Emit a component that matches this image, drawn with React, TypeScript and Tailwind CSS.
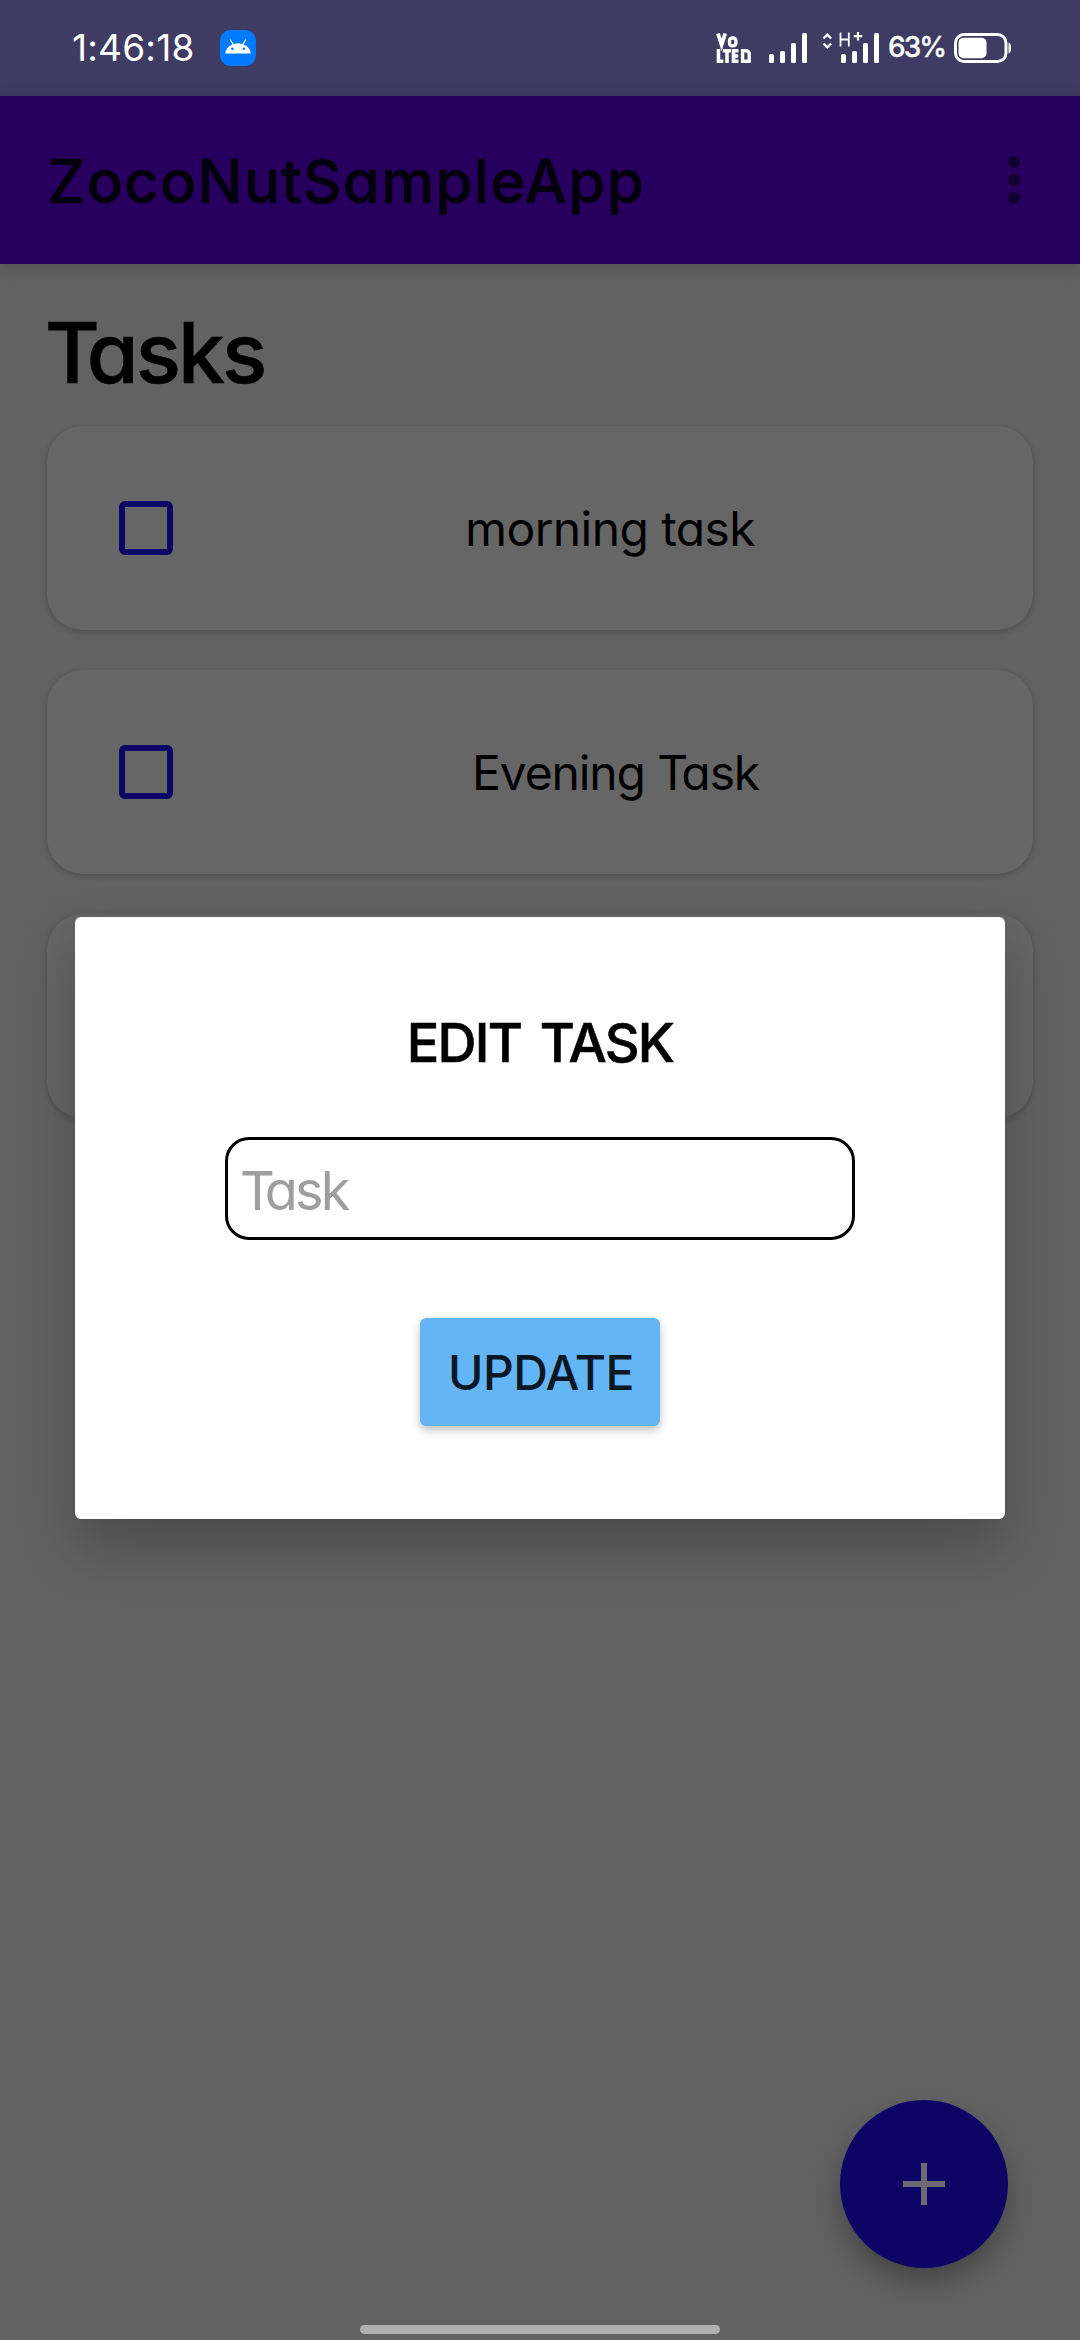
import React from "react";

function StatusBar() {
  return (
    <header className="flex h-24 shrink-0 items-start bg-[#3f3b63] text-white">
      <div className="ml-[72px] mt-[22px] w-[148px] whitespace-nowrap text-[37px] leading-[51px] tracking-[0.2px]">1:46:18</div>
      <svg className="mt-[30px]" width="36" height="36" viewBox="0 0 36 36">
        <rect width="36" height="36" rx="11" fill="#007bff" />
        <path d="M5.2 23.5a12.9 11.8 0 0 1 25.6 0z" fill="#fff" />
        <path d="M10.5 10l3 5M25.5 10l-3 5" stroke="#fff" strokeWidth="1.3" strokeLinecap="round" />
        <circle cx="12.4" cy="18.7" r="1.3" fill="#007bff" />
        <circle cx="23.8" cy="18.7" r="1.3" fill="#007bff" />
      </svg>
      <svg className="ml-[460px] mt-[32px]" width="35" height="32" viewBox="0 0 35 32" fill="none" stroke="#fff" strokeWidth="3.8">
        <path d="M2 1.5l3.6 11.5L9.2 1.5" />
        <rect x="13.5" y="6" width="6.4" height="7.8" rx="2.6" strokeWidth="3.4" />
        <path d="M2.5 17v12.2H7.4M6.8 18.8h8.2M11 18.8V31M22.4 18.8h-4.9v10.5h4.9M17.5 24h4.6" strokeWidth="3.6" />
        <path d="M26.6 18.8h4.6l2 2v8.5h-6.6z" strokeWidth="3.4" />
      </svg>
      <svg className="ml-[18px] mt-[32px]" width="39" height="32" viewBox="0 0 39 32" fill="#fff">
        <rect x="0" y="22" width="5" height="9" rx="1.5" />
        <rect x="11" y="19" width="5" height="12" rx="1.5" />
        <rect x="22" y="11" width="5" height="20" rx="1.5" />
        <rect x="33" y="1" width="5" height="30" rx="1.5" />
      </svg>
      <svg className="ml-[14px] mt-[32px]" width="58" height="32" viewBox="0 0 58 32" fill="#fff">
        <path d="M1.5 6.5l3.8-3.8 3.8 3.8M1.5 11.5l3.8 3.8 3.8-3.8" fill="none" stroke="#fff" strokeWidth="2.4" />
        <path d="M18.5 0.5v14M26.8 0.5v14M18.5 7.5h8.3" stroke="#fff" strokeWidth="1.8" />
        <path d="M36 0v8.4M31.8 4.2h8.4" stroke="#fff" strokeWidth="2.2" />
        <rect x="19" y="22" width="5" height="9" rx="1.5" />
        <rect x="30" y="19" width="5" height="12" rx="1.5" />
        <rect x="41" y="11" width="5" height="20" rx="1.5" />
        <rect x="52" y="1" width="5" height="30" rx="1.5" />
      </svg>
      <div className="ml-[8px] mt-[27px] w-[65px] whitespace-nowrap text-[28px] font-medium leading-[40px] tracking-[-2px] [-webkit-text-stroke:0.3px]">63%</div>
      <svg className="mt-[32px]" width="60" height="32" viewBox="0 0 60 32">
        <rect x="2.5" y="2.5" width="50.5" height="27" rx="8.5" fill="none" stroke="#fff" strokeWidth="3" />
        <rect x="5.5" y="5.8" width="28" height="20.4" rx="5" fill="#fff" />
        <path d="M55.5 10.5q2.5 1 2.5 3v5q0 2-2.5 3z" fill="#fff" />
      </svg>
    </header>
  );
}

function TaskCard({ className = "", children }: { className?: string; children?: React.ReactNode }) {
  return (
    <li className="flex h-[204px] items-center rounded-[36px] bg-[#666666] pl-[72px] shadow-[0_2px_6px_rgba(0,0,0,0.22)]">
      <span className="h-[54px] w-[54px] rounded-[6px] border-[6px] border-[#0d0566]" />
      <span className={"whitespace-nowrap pt-[2px] text-[48px] leading-[58px] " + className}>{children}</span>
    </li>
  );
}

export default function App() {
  return (
    <div className="relative flex h-[2340px] w-[1080px] flex-col overflow-hidden bg-[#626262] font-['Inter','Noto_Sans',sans-serif] text-black [font-feature-settings:'cv11']">
      <StatusBar />
      <div className="flex h-[168px] shrink-0 items-center bg-[#27005f] pl-[47px] pr-[60px] shadow-[0_3px_14px_rgba(0,0,0,0.2)]">
        <h1 className="flex-1 whitespace-nowrap pt-[2px] text-[60px] font-medium leading-[72px] tracking-[1.2px] text-[#05000d] [-webkit-text-stroke:0.7px]">ZocoNutSampleApp</h1>
        <div className="flex flex-col gap-[6px]">
          <i className="h-3 w-3 rounded-full bg-[#14002f]" />
          <i className="h-3 w-3 rounded-full bg-[#14002f]" />
          <i className="h-3 w-3 rounded-full bg-[#14002f]" />
        </div>
      </div>
      <main className="px-[47px]">
        <h2 className="-ml-[2px] mt-[39px] h-[123px] whitespace-nowrap text-[84px] font-medium leading-[100px] tracking-[-3px] [-webkit-text-stroke:0.7px]">
          <span className="tracking-[-13px]">T</span>asks
        </h2>
        <ul className="flex flex-col gap-10">
          <TaskCard className="ml-[292px] tracking-[-0.6px]">morning task</TaskCard>
          <TaskCard className="ml-[299px] tracking-[-1.1px]">
            Evening <span className="tracking-[-7px]">T</span>ask
          </TaskCard>
          <TaskCard />
        </ul>
      </main>
      <button className="absolute left-[840px] top-[2100px] flex h-[168px] w-[168px] items-center justify-center rounded-full bg-[#0d0566] shadow-[0_14px_28px_rgba(0,0,0,0.3)]">
        <svg width="42" height="42" viewBox="0 0 42 42" fill="#6c6a74">
          <path d="M18 0h6v18h18v6H24v18h-6V24H0v-6h18z" />
        </svg>
      </button>
      <section className="absolute left-[75px] top-[917px] flex h-[602px] w-[930px] flex-col items-center rounded-[6px] bg-white shadow-[0_28px_60px_rgba(0,0,0,0.24)]">
        <h3 className="mt-[93px] whitespace-nowrap text-[54px] font-medium leading-[66px] tracking-[-1.8px] [word-spacing:6px] [-webkit-text-stroke:0.6px]">EDIT TASK</h3>
        <div className="mt-[61px] flex h-[103px] w-[630px] items-center rounded-[24px] border-[3px] border-black pl-[12px] pt-[3px] text-[54px] tracking-[-2.8px] text-[#9e9e9e]">
          <span className="tracking-[-10px]">T</span>ask
        </div>
        <button className="mt-[78px] flex h-[108px] w-[240px] items-center justify-center rounded-[6px] bg-[#64b5f6] pl-[2px] pt-[2px] text-[48px] font-medium tracking-[-0.6px] text-[#0a1823] shadow-[0_4px_8px_rgba(0,0,0,0.25)]">UPDATE</button>
      </section>
      <div className="absolute left-[360px] top-[2325px] h-[9px] w-[360px] rounded-full bg-[#b0b0b0]" />
    </div>
  );
}
